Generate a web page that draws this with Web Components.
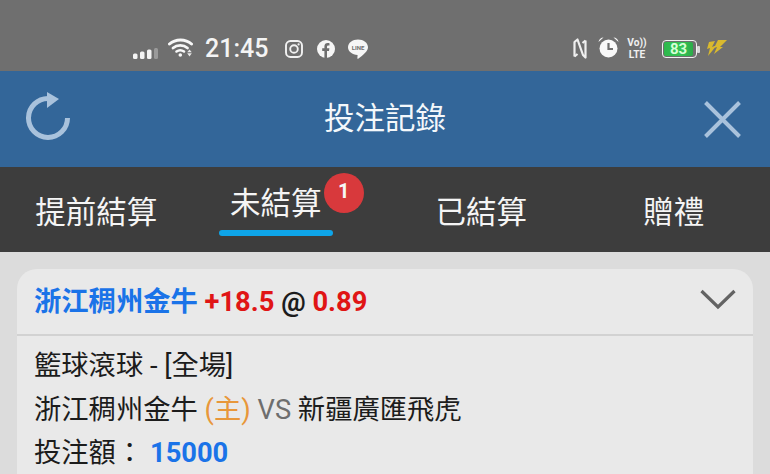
<!DOCTYPE html>
<html lang="zh-Hant">
<head>
<meta charset="utf-8">
<title>投注記錄</title>
<style>
  html, body { margin: 0; padding: 0; }
  body {
    width: 770px;
    height: 474px;
    overflow: hidden;
    background: #dcdcdc;
    font-family: Roboto, "Noto Sans CJK TC", sans-serif;
  }
</style>
</head>
<body>
<status-bar></status-bar>
<title-bar>投注記錄</title-bar>
<tab-bar></tab-bar>
<bet-card></bet-card>

<script>
class StatusBar extends HTMLElement {
  constructor() {
    super();
    this.attachShadow({ mode: 'open' });
  }
  connectedCallback() {
    this.shadowRoot.innerHTML = /* html */`
    <style>
      :host {
        display: flex;
        align-items: center;
        justify-content: space-between;
        box-sizing: border-box;
        height: 71px;
        padding: 27px 43px 0 133px;
        background: #6f6f6f;
        color: #fff;
      }
      .side { display: flex; align-items: center; }
      svg { display: block; flex: none; }
      .time { font-size: 25px; line-height: 30px; font-weight: 500; margin: 0 17px 0 11px; color: #f4f4f4; }
      .volte { font: 700 10.200px/11.900px Roboto, sans-serif; width: 20px; text-align: center; margin: 0 15px 0 8px; color: #f0f0f0; }
      .volte span { display: block; }
      .batt { display: flex; align-items: center; width: 33px; height: 16px; border: 1.5px solid #f2f2f2; border-radius: 4px; }
      .batt b { display: block; width: 29px; height: 14px; margin-left: 1px; background: linear-gradient(90deg, #2eb84c, #34c455 60%, #2bab48); border-radius: 2px; font: 700 15px/14px Roboto, sans-serif; color: #d5ffd5; text-align: center; }
    </style>
    <div class="side">
      <svg width="25" height="11" viewBox="0 0 25 11" style="margin:9px 10px 0 0"><g fill="#f4f4f4"><rect x="0" y="5.500" width="4.500" height="5.500" rx="1.500"/><rect x="7" y="3.500" width="4.500" height="7.500" rx="1.500"/><rect x="14" y="1.500" width="4.500" height="9.500" rx="1.500"/></g><rect x="21" y="0" width="4" height="11" rx="1.500" fill="#9a9a9a"/></svg>
      <svg width="26" height="19" viewBox="0 0 26 19" style="margin-top:-3px" fill="none" stroke="#f8f8f8" stroke-linecap="round"><path d="M1.500 6 C7.500 0.500 17.500 0.500 23.500 6" stroke-width="3"/><path d="M5 10 C9 6.500 15.500 6.500 19.500 10" stroke-width="2.800"/><path d="M8.500 13.500 C11 11.800 13.500 11.800 16 13.500" stroke-width="2.600"/><circle cx="12.300" cy="17" r="1.800" fill="#f8f8f8" stroke="none"/><path d="M21.500 11.500 L23.800 14.300 H19.200Z M19.200 15.300 H23.800 L21.500 18.500Z" fill="#e8e8e8" stroke="none"/></svg>
      <span class="time">21:45</span>
      <svg width="18" height="18" viewBox="0 0 18 18" fill="none" stroke="#f2f2f2" stroke-width="1.900"><rect x="1" y="1" width="16" height="16" rx="4.500"/><circle cx="9" cy="9" r="3.800"/><circle cx="13.600" cy="4.400" r="1.100" fill="#f2f2f2" stroke="none"/></svg>
      <svg width="18" height="18" viewBox="0 0 18 18" style="margin-left:14px"><circle cx="9" cy="9" r="9" fill="#f6f6f6"/><path d="M7.400 18 V11 H5.200 V8.300 H7.400 V6.400 C7.400 4.200 8.700 3 10.700 3 C11.600 3 12.500 3.200 12.500 3.200 V5.400 H11.400 C10.300 5.400 10 6 10 6.700 V8.300 H12.400 L12 11 H10 V18Z" fill="#6f6f6f"/></svg>
      <svg width="20" height="21" viewBox="0 0 20 21" style="margin-left:13px"><path d="M10 0.500 C15.500 0.500 20 3.800 20 8.300 C20 12 15 16.500 10.500 19.500 C9.500 20.200 9.200 19.500 9.400 18.500 L9.600 16 C4.200 15.700 0 12.500 0 8.300 C0 3.800 4.500 0.500 10 0.500Z" fill="#f6f6f6"/><text x="10" y="10.500" text-anchor="middle" font-family="Roboto, sans-serif" font-size="6" font-weight="700" fill="#6f6f6f">LINE</text></svg>
    </div>
    <div class="side">
      <svg width="14" height="21" viewBox="0 0 14 21" style="margin-top:-2px" fill="none" stroke="#efefef" stroke-width="2.200" stroke-linejoin="round"><path d="M1.500 18.500 V4 L4.500 1.500 L10 17 L12.500 19.500 V2.500"/><path d="M1.500 18.500 L4.500 16"/><path d="M12.500 2.500 L9.500 5"/></svg>
      <svg width="21" height="21" viewBox="0 0 21 21" style="margin:-3px 0 0 11px"><circle cx="10.500" cy="11.500" r="9" fill="#f8f8f8"/><path d="M10.500 6 V12 H15" fill="none" stroke="#6f6f6f" stroke-width="2.200"/><path d="M0.500 5 C1 2 3 0.500 5.500 0.500Z M20.500 5 C20 2 18 0.500 15.500 0.500Z" fill="#f8f8f8"/></svg>
      <div class="volte"><span>Vo))</span><span>LTE</span></div>
      <div class="batt"><b>83</b></div>
      <svg width="3" height="7" viewBox="0 0 3 7" style="margin-right:6px"><rect width="3" height="7" rx="1" fill="#d8d8d8"/></svg>
      <svg width="21" height="18" viewBox="0 0 21 18" style="margin-top:-3px"><path d="M3 3 L9 2 L6 8 L11 6 L2 17 L4 9 L1 10 Z M12 1 H21 L14 8 H17 L8 15 L11 8 L8 9 Z" fill="#d9b92e"/></svg>
    </div>
    `;
  }
}

class TitleBar extends HTMLElement {
  constructor() {
    super();
    this.attachShadow({ mode: 'open' });
  }
  connectedCallback() {
    this.shadowRoot.innerHTML = /* html */`
    <style>
      :host {
        display: flex;
        align-items: center;
        justify-content: space-between;
        box-sizing: border-box;
        height: 96px;
        padding: 0 29px 0 26px;
        background: #336699;
        color: #f4f8fb;
      }
      .title { font-size: 30.500px; line-height: 44px; margin-right: 5px; }
      svg { display: block; }
      .reload { margin-bottom: 6px; }
    </style>
    <svg class="reload" width="45" height="48" viewBox="0 0 45 48" fill="none"><path d="M41.500 26 A19.500 19.500 0 1 1 22.500 6.500" stroke="#a9c2dc" stroke-width="5"/><path d="M21 0 L33 7 L21 16 Z" fill="#a9c2dc"/></svg>
    <div class="title"><slot></slot></div>
    <svg width="37" height="37" viewBox="0 0 37 37" stroke="#a9c2dc" stroke-width="4"><path d="M1.500 1.500 L35.500 35.500 M35.500 1.500 L1.500 35.500"/></svg>
    `;
  }
}

class TabBar extends HTMLElement {
  constructor() {
    super();
    this.attachShadow({ mode: 'open' });
  }
  connectedCallback() {
    this.shadowRoot.innerHTML = /* html */`
    <style>
      :host {
        display: grid;
        grid-template-columns: repeat(4, 1fr);
        box-sizing: border-box;
        height: 85px;
        background: #3d3d3d;
        color: #f5f5f5;
        font-size: 30.500px;
      }
      .tab { display: flex; align-items: center; justify-content: center; }
      .on {
        position: relative;
        width: 114px;
        text-align: center;
        margin: -4px 26px 0 0;
        padding-bottom: 8px;
        line-height: 44px;
      }
      .on::after {
        content: "";
        position: absolute;
        left: 0; right: 0; bottom: -2px;
        height: 6px;
        border-radius: 3px;
        background: #0ea5e9;
      }
      .badge {
        position: absolute;
        left: 105px; top: -9px;
        width: 40px; height: 40px;
        border-radius: 50%;
        background: #d8393c;
        color: #f6f6f6;
        font: 700 20px/36px Roboto, sans-serif;
        text-align: center;
      }
    </style>
    <div class="tab">提前結算</div>
    <div class="tab"><div class="on">未結算<span class="badge">1</span></div></div>
    <div class="tab">已結算</div>
    <div class="tab">贈禮</div>
    `;
  }
}

class BetCard extends HTMLElement {
  constructor() {
    super();
    this.attachShadow({ mode: 'open' });
  }
  connectedCallback() {
    this.shadowRoot.innerHTML = /* html */`
    <style>
      :host {
        display: block;
        margin: 17px 17px 0;
        background: #e9e9e9;
        border-radius: 20px 20px 0 0;
        color: #1c1c1c;
      }
      .head {
        display: flex;
        align-items: center;
        justify-content: space-between;
        box-sizing: border-box;
        height: 67px;
        padding: 0 17px 0 17px;
        border-bottom: 2px solid #d2d2d2;
        font-size: 27.300px;
        font-weight: 700;
      }
      .head > div { margin-bottom: 6px; }
      .head svg { margin: 0 0 4px; }
      .blue { color: #1a73e8; }
      .red { color: #e01515; }
      .body { padding: 9px 17px 0; font-size: 27.300px; line-height: 43.500px; }
      .row { white-space: nowrap; }
      .orange { color: #e8973a; }
      .grey { color: #6e6e6e; }
      .num { color: #1a73e8; font-weight: 700; }
      svg { display: block; }
    </style>
    <div class="head">
      <div><span class="blue">浙江稠州金牛</span> <span class="red">+18.5</span> @ <span class="red">0.89</span></div>
      <svg width="36" height="22" viewBox="0 0 36 22" fill="none" stroke="#636363" stroke-width="3.200"><path d="M1.500 2 L18 18 L34.500 2"/></svg>
    </div>
    <div class="body">
      <div class="row">籃球滾球 - [全場]</div>
      <div class="row">浙江稠州金牛 <span class="orange">(主)</span> <span class="grey">VS</span> 新疆廣匯飛虎</div>
      <div class="row">投注額： <span class="num">15000</span></div>
    </div>
    `;
  }
}

customElements.define('status-bar', StatusBar);
customElements.define('title-bar', TitleBar);
customElements.define('tab-bar', TabBar);
customElements.define('bet-card', BetCard);
</script>
</body>
</html>
